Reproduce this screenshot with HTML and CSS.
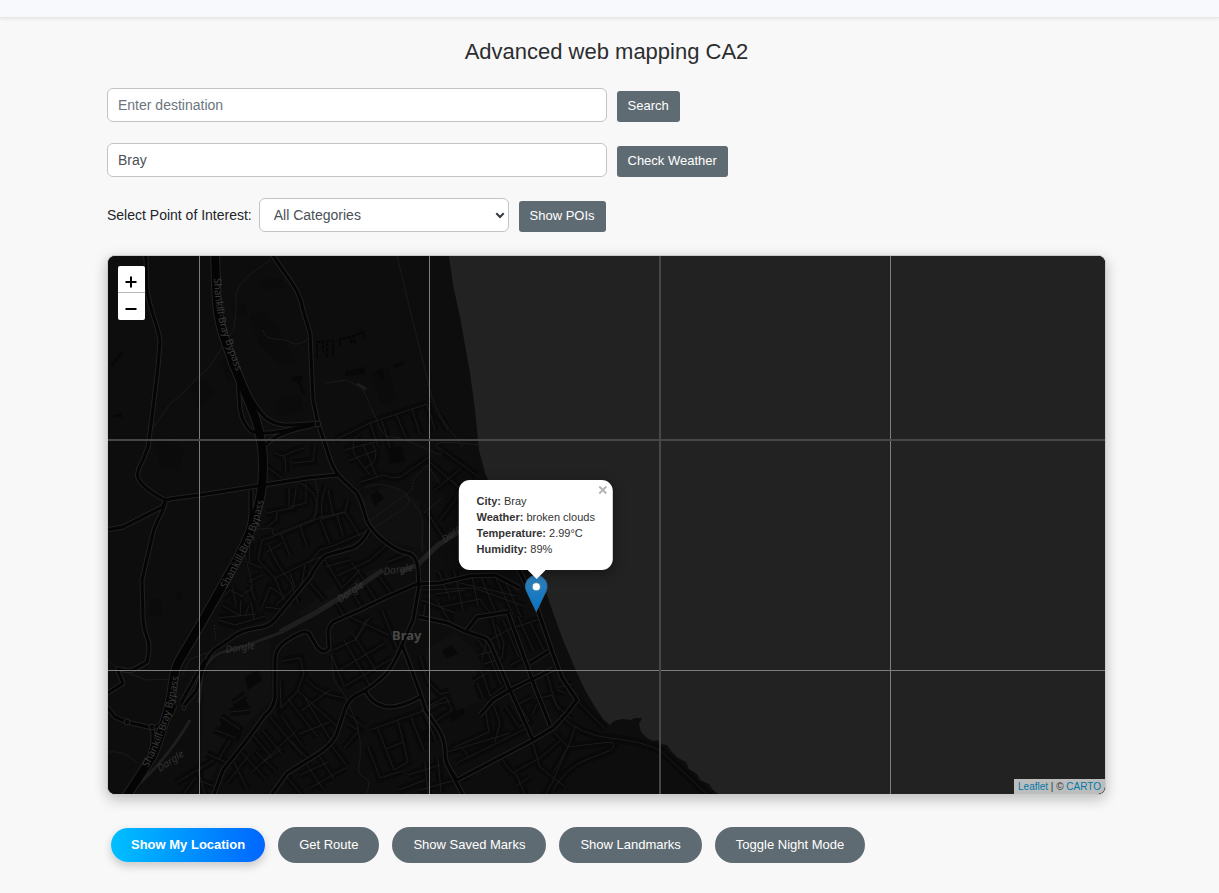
FILE: index.html
```html
<!DOCTYPE html>
<html lang="en">
<head>
<meta charset="utf-8">
<meta name="viewport" content="width=device-width, initial-scale=1">
<title>Advanced web mapping CA2</title>
<link rel="stylesheet" href="styles.css">
</head>
<body>
<header class="topbar"></header>
<main class="page">
  <h1 class="title">Advanced web mapping CA2</h1>
  <form class="row">
    <input class="field" type="text" placeholder="Enter destination" aria-label="Destination">
    <button class="btn" type="button">Search</button>
  </form>
  <form class="row">
    <input class="field" type="text" value="Bray" aria-label="City">
    <button class="btn" type="button">Check Weather</button>
  </form>
  <form class="row">
    <label class="poi-label" for="poi">Select Point of Interest:</label>
    <span class="select-wrap">
      <select class="select" id="poi"><option>All Categories</option></select>
      <svg class="chevron" viewBox="0 0 10 7" aria-hidden="true"><path d="M1.3 1.3 5 5l3.700-3.700"/></svg>
    </span>
    <button class="btn" type="button">Show POIs</button>
  </form>

  <section class="map" aria-label="Map">
    <svg class="tiles" viewBox="108 256 997 538" preserveAspectRatio="xMinYMin slice">
      <defs>
        <path id="motorway" d="M215 250 216 285C217 310 219 322 224 337L233 363 243 387 255 417C260 432 263 445 263 463S262 495 255 517 243 548 233 567L203 620C190 643 182 655 178 663S173 682 172 690 168 711 165 720 158 745 152 757L126 797"/>
        <g id="roads">
          <path d="M143 250 146 258 147 290C150 312 160 330 160 342L158 367 152 417 148 447 143 460Q136 472 138 478T153 493 170 499L200 495 257 486 307 478 338 475"/>
          <path d="M106 530 123 527 162 507Q166 503 165 498M165 503C163 514 156 520 153 533L142 580 143 617Q143 627 147 637T147 662L133 670Q124 671 120 669T120 676 122 684L106 694"/>
          <path d="M269 250 285 273C298 291 301 298 303 310L310 333 311 355 313 400 318 423 327 450Q332 468 339 476L357 493Q362 502 365 515T383 540 407 553 418 569L419 587 413 620 402 645Q393 668 383 677T363 692Q349 697 345 709T337 733 313 757L287 773 270 797"/>
          <path d="M402 645 409 663 420 693 426 711 437 727Q445 739 445 750T448 766L464 797"/>
          <path d="M369 530Q361 545 352 548L327 555Q320 558 310 577L277 617Q271 625 263 627C250 629 240 631 233 637L214 650C202 662 202 676 196 691L183 707"/>
          <path d="M520 588 495 575 470 576 440 583 417 584 387 597 360 610 333 622Q328 627 328 633L329 648Q324 655 317 647L309 633Q305 630 298 634C280 643 275 650 275 660L275 698Q273 709 265 715L247 740 223 770 213 797"/>
          <path d="M419 617 447 623 467 632 485 638Q489 640 492 648L510 690 533 740M457 780 533 740 553 728 567 713 577 700 562 678 553 654 536 605 524 580 513 558M508 613 536 690 550 725M480 715 493 700 510 690 553 669M467 630 477 617 508 612M530 663 549 651M446 763 457 780"/>
          <path d="M106 706 115 717 127 722 152 728Q169 724 175 705M181 703 205 660M152 728Q155 742 150 754"/>
          <path d="M238 378 240 409Q242 423 251 431C265 437 290 429 318 424M241 380C249 393 255 409 266 418S287 426 318 423M266 445C270 438 288 430 311 426M365 690Q370 702 383 706T420 697"/>
          <path d="M251 490 251 508Q252 524 242 547M460 565 494 544"/>
        </g>
        <g id="streets">
          <path d="M360 434Q350 441 354 454L370 475M363 444 377 477M335 440 370 423 427 404M370 423 378 446M382 421 390 448M396 414 406 438M412 409 420 434M427 404 435 430M438 414 448 430M345 450 375 442M348 461 377 450M360 482 384 475Q394 480 402 476L429 457M365 468Q382 461 373 444"/>
          <path d="M267 467 282 478M275 453 285 457 286 472M283 456Q296 450 304 448M293 463 313 461 315 445M267 513 293 508 296 489M289 488 289 507 306 503 306 483M300 483Q320 493 317 511L314 518M326 487Q320 498 322 519L345 512 348 500M333 515 328 489M267 527 276 520 277 512"/>
          <path d="M262 540 280 534 300 526 322 517 345 512 360 536M281 534 290 556M300 526 307 546M320 519 330 544M337 515 343 536M262 540 258 560 275 578 302 565 340 548M267 552 282 543M275 578 284 600M290 573 295 587 276 605M305 565 302 583M269 545Q275 564 291 582L298 603M262 568 249 563 250 543M262 575 248 582M309 563 320 550 335 545 370 530"/>
          <path d="M370 560 387 545M388 562 408 554M360 570 342 588 325 560M352 563 365 581M378 575 391 593M365 583 376 600M351 591 361 606M335 601 345 617M325 567 350 560M337 576 370 560M310 583 325 600"/>
          <path d="M222 598 230 590 244 597M222 605 240 616 241 600M232 587 236 604M218 618 256 614M245 616 249 605M255 600 250 585M262 607 270 587 285 597M265 607 280 609M254 620 251 602M218 620 235 625 265 616"/>
          <path d="M282 661 300 658 304 674 297 692 281 708 280 680M297 690 329 719 339 728M288 699 317 736M305 698 332 742M281 715 303 747M270 717 302 755M263 731 283 755M253 735 272 758M240 751 266 779M234 762 247 789M227 783 249 755M252 772 296 731M301 711 330 690M307 680Q320 695 345 698M299 734 330 722M291 741 308 759M276 771 255 751M262 763 281 749"/>
          <path d="M332 656 344 686M344 640 372 689M353 634 377 672M333 650 355 640 367 619M340 670 385 643M345 686 393 658M350 617 389 635M382 610 397 648M370 617 355 641M343 710 363 726M347 723 359 731 344 748M328 741 347 766M318 754 334 779M306 763 323 789M287 777 302 795M310 788 345 768M300 775 328 762"/>
          <path d="M370 730 398 720 437 706M378 729 394 770 408 762 398 721M386 749 403 742M411 717 424 750M424 712 436 741M425 762 428 794M438 758 441 792M420 790 470 776M408 775 440 765M399 790 425 780M368 747 380 778 402 771M420 656 428 682 440 694 449 692M421 710 446 697 452 710 430 725M431 706 450 701"/>
          <path d="M435 594 465 590M440 607 480 599 492 616M422 600 455 613M439 572 450 599M454 570 463 610M472 576 478 606M481 577 496 613M495 576 513 614M506 583 521 617M423 590 474 588 524 606M456 582 516 596M425 605 423 620M437 601 451 623"/>
          <path d="M488 641 510 629 540 619M492 618 500 649M478 640 489 655 501 685M503 620 519 657M518 616 534 652M530 622 544 650M487 640 482 658M484 664 502 658 504 643 497 625M481 670 490 696 504 686M478 655 494 651M474 681 487 673M483 698 477 683M510 689 534 679M511 665 523 658M515 706 532 697M506 707 519 727 529 721 517 702M533 714Q535 703 543 701M541 698 552 695 559 710M547 674 556 705 571 719"/>
          <path d="M494 706 500 723 495 742M485 707 489 732 453 748M447 752 510 733M457 763 527 728M461 747 469 757M503 760Q510 772 516 774L525 794M514 772 540 758 560 741M533 744 540 767 565 787M555 733 568 747 601 743M575 727 570 742 552 783 544 797M568 747 553 773M601 743Q620 740 611 750L583 761Q566 769 553 790M560 715Q580 735 610 738T660 750L710 797M559 687 573 684M558 690 565 693M577 700 605 729M516 786 530 777"/>
          <path d="M440 520 456 499M445 540 427 512M452 480 480 510M430 462 470 498M459 470 435 490M438 447 476 475"/>
          <path d="M176 783 202 767M183 795 196 777M205 794 198 770 214 760M219 759 230 740M207 754 230 764M200 781 219 788"/>
          <path d="M234 703 245 695M230 712 250 710M221 717 240 729M215 730 236 738"/>
        </g>
        <g id="paths">
          <path d="M108 660 118 669 146 680 174 679M151 431 170 404 181 395 197 378 208 369 219 352 234 329 236 310 236 292Q242 277 271 260M397 256 410 310 425 370 432 398Q438 417 463 447M375 415Q382 438 390 437T424 448 438 449 479 445M263 330Q265 339 276 339T292 343 310 338M325 383 346 380 362 388 368 400 375 417"/>
          <path d="M331 654 334 680 345 696 352 712Q359 725 360 740T359 765 365 778 365 796M370 530 405 508Q416 495 396 488T365 488M405 495Q425 510 423 530T423 552M424 513 442 498M108 752Q125 750 137 763M182 676 190 659 215 650"/>
        </g>
        <path id="bypass-north" d="M214 278C215 304 218 322 224 337L233 363 243 390"/>
        <path id="bypass-mid" d="M226 589 238 567C252 542 260 520 266 491"/>
        <path id="bypass-south" d="M148 768C160 745 169 722 174 700L181 665"/>
        <path id="dargle-a" d="M340 603 368 584"/>
        <path id="dargle-b" d="M384 575 418 570"/>
        <path id="dargle-c" d="M226 653 260 648"/>
        <path id="dargle-d" d="M160 772 190 752"/>
        <path id="dargle-e" d="M445 543 475 520"/>
      </defs>
      <rect class="land" x="100" y="250" width="4000" height="600"/>
      <g class="park">
        <path d="M297 614 340 580 380 567 365 582 335 602 300 616ZM204 678 217 657 270 640 272 700 230 740 205 790 200 780ZM425 650 455 632 480 655 482 700 450 715 430 700ZM357 500 390 485 420 500 425 550 400 545 370 530Z"/>
      </g>
      <g class="blocks-soft">
        <path d="M155 442 172 438 184 450 178 470 160 466ZM190 385 205 381 216 394 198 406ZM220 360 232 357 238 380 228 382ZM260 280 282 278 284 287 262 290ZM250 315 266 312 285 340 295 362 282 366 260 345ZM275 400 300 395 304 412 278 416ZM370 374 388 368 396 400 382 404ZM232 305 246 303 247 313 236 316ZM150 600 160 598 162 615 150 616ZM176 593 182 591 182 601 176 601Z"/>
      </g>
      <g class="blocks">
        <path d="M292 377 303 376 303 380 300 381 306 394 302 394 297 382 292 382ZM345 371 365 367 365 374 345 376ZM393 365 404 361 404 364 395 368ZM373 373 382 368 385 377 381 379 379 374ZM370 495 378 491 384 498 375 506ZM388 448 402 446 405 462 390 464ZM442 650 452 645 458 654 446 658ZM449 716 463 708 465 714 452 722ZM418 732 427 729 429 741 420 743Z"/>
        <path d="M110 365 122 350 123 354 112 367ZM110 416 122 413 122 418ZM245 677 258 670 262 680 248 690ZM233 703 245 697 250 710 235 716ZM222 720 243 727 239 741 218 733Z"/>
      </g>
      <path class="terraces" d="M317 358V342H323V352M327 357V341H333V356M340 346V339L350 337 352 344M355 343 353 336 363 332 365 339"/>
      <use href="#streets" class="street-bed"/>
      <path class="sea" d="M448 250 453 285 460 317 465 345 470 373 475 410 479 450 485 473 496 500 513 535 530 560 542 580 552 610 563 640 577 673 586 692 595 707 603 719 610 725 614 721 622 719 631 720 635 718 642 718 639 724 641 732 647 738 653 741 658 740 660 744 667 745 671 751 678 758 686 762 689 769 697 774 700 780 709 784 713 790 722 797 4000 797 4000 250Z"/>
      <path class="river-wide" d="M460 531 438 545 417 565 400 572M383 570 358 587 317 612 280 632"/>
      <path class="river" d="M320 610 280 633 245 646 220 653Q204 662 202 676L199 703M357 384 366 389M190 720Q170 755 140 783"/>
      <use href="#streets" class="street"/>
      <use href="#paths" class="footpath"/>
      <path class="dashed" d="M315 480 318 495 314 519 273 535 272 528 249 530M245 555 253 588 239 597M371 520 412 490 414 478 428 465 440 484M214 625 216 640"/>
      <use href="#roads" class="road-edge"/>
      <use href="#motorway" class="motorway-edge"/>
      <use href="#roads" class="road"/>
      <use href="#motorway" class="motorway"/>
      <g class="road-edge-thin"><circle cx="318" cy="424" r="3"/><circle cx="152" cy="727" r="3"/><circle cx="184" cy="708" r="2"/><circle cx="127" cy="722" r="3"/></g>
      <g class="map-label">
        <text><textPath href="#bypass-north">Shankill-Bray Bypass</textPath></text>
        <text><textPath href="#bypass-mid">Shankill-Bray Bypass</textPath></text>
        <text><textPath href="#bypass-south">Shankill-Bray Bypass</textPath></text>
      </g>
      <g class="map-label water">
        <text><textPath href="#dargle-a">Dargle</textPath></text>
        <text><textPath href="#dargle-b">Dargle</textPath></text>
        <text><textPath href="#dargle-c">Dargle</textPath></text>
        <text><textPath href="#dargle-d">Dargle</textPath></text>
        <text><textPath href="#dargle-e">Dargle</textPath></text>
      </g>
      <text class="town" x="392" y="640">Bray</text>
      <g class="seam">
        <path d="M199.500 250V800M429.500 250V800M890.500 250V800M100 670.500H4000"/>
      </g>
      <g class="seam-soft"><path d="M660 250V800M100 440H4000"/></g>
    </svg>

    <div class="zoom">
      <button class="zoom-btn" type="button" aria-label="Zoom in"><svg viewBox="0 0 12 12"><path d="M6 .5v11M.5 6h11"/></svg></button>
      <button class="zoom-btn" type="button" aria-label="Zoom out"><svg viewBox="0 0 12 12"><path d="M.5 6h11"/></svg></button>
    </div>

    <div class="pin">
      <div class="popup">
        <button class="popup-close" type="button" aria-label="Close"><svg viewBox="0 0 10 10"><path d="M1.500 1.500l7 7M8.500 1.500l-7 7"/></svg></button>
        <b>City:</b> Bray<br>
        <b>Weather:</b> broken clouds<br>
        <b>Temperature:</b> 2.99°C<br>
        <b>Humidity:</b> 89%
      </div>
      <svg class="marker" viewBox="0 0 25 41" aria-hidden="true">
        <defs><linearGradient id="pin-fill" x1="0" y1="0" x2="0" y2="1"><stop offset="0" stop-color="#3181b8"/><stop offset="1" stop-color="#0873c9"/></linearGradient></defs>
        <path d="M12.500.5C5.600.5.5 6 .5 12.500c0 3 1.200 5.700 2.600 8.400L12.500 40.500l9.400-19.600c1.400-2.700 2.600-5.400 2.600-8.400C24.500 6 19.400.5 12.500.5Z" fill="url(#pin-fill)" stroke="#2d6f9f"/>
        <circle cx="12.500" cy="13" r="4.500" fill="#fff" stroke="#3f7fad"/>
      </svg>
      <span class="tip"></span>
    </div>

    <div class="credit"><a href="#">Leaflet</a> | © <a href="#">CARTO</a></div>
  </section>

  <div class="actions">
    <button class="pill primary" type="button">Show My Location</button>
    <button class="pill" type="button">Get Route</button>
    <button class="pill" type="button">Show Saved Marks</button>
    <button class="pill" type="button">Show Landmarks</button>
    <button class="pill" type="button">Toggle Night Mode</button>
  </div>
</main>
</body>
</html>
```
FILE: styles.css
```css
*, *::before, *::after { box-sizing: border-box; }
body {
  margin: 0;
  background: #f8f8f8;
  color: #212529;
  font-family: "Liberation Sans", Arial, sans-serif;
  font-size: 14px;
}
button, input, select { font-family: inherit; margin: 0; }
.topbar {
  height: 18px;
  background: #f7f9fc;
  border-bottom: 1px solid #e6e7e8;
  box-shadow: 0 1px 3px rgba(0, 0, 0, .08);
}
.page { padding: 20px 113px 30px 107px; }
.title {
  margin: 0 0 22px;
  font-size: 22px;
  line-height: 28px;
  font-weight: 400;
  text-align: center;
  color: #2b2d2f;
}
.row { display: flex; align-items: flex-end; margin-bottom: 21px; }
.field, .select {
  height: 34px;
  border: 1px solid #c2c4c6;
  border-radius: 6px;
  background: #fff;
  color: #495057;
  font-size: 14px;
}
.field { width: 50%; padding: 0 10px; }
.field::placeholder { color: #6c757d; opacity: 1; }
.poi-label { line-height: 34px; }
.select-wrap { position: relative; width: 25%; margin-left: 7px; }
.select { display: block; width: 100%; padding: 0 14px; appearance: none; }
.chevron {
  position: absolute;
  right: 4px;
  top: 14px;
  width: 10px;
  height: 7px;
  fill: none;
  stroke: #343a40;
  stroke-width: 2;
}
.btn {
  height: 31px;
  margin-left: 10px;
  padding: 0 11px 2px;
  border: 0;
  border-radius: 3px;
  background: #5f6b72;
  color: #fff;
  font-size: 13px;
}
.map {
  position: relative;
  height: 540px;
  margin-top: 23px;
  border: 1px solid #c9cccc;
  border-radius: 8px;
  background: #222;
  box-shadow: 0 4px 14px rgba(0, 0, 0, .25);
  overflow: hidden;
}
.tiles { display: block; width: 100%; height: 100%; fill: none; }
.land { fill: #0d0d0d; }
.park { fill: #101010; }
.blocks { fill: #080808; }
.blocks-soft { fill: #0b0b0b; }
.terraces { stroke: #060606; stroke-width: 2; stroke-dasharray: 4 1; }
.sea { fill: #222; }
.street-bed { stroke: #090909; stroke-width: 8; }
.street { stroke: #1b1b1b; stroke-width: 1; }
.footpath { stroke: #1b1b1b; }
.dashed { stroke: #202020; stroke-dasharray: 2 1; }
.river { stroke: #1e1e1e; stroke-width: 3; }
.river-wide { stroke: #202020; stroke-width: 5; }
.road-edge { stroke: #212121; stroke-width: 5; }
.road-edge-thin { stroke: #252525; fill: #080808; }
.road { stroke: #050505; stroke-width: 3; }
.motorway-edge { stroke: #222; stroke-width: 10; }
.motorway { stroke: #040404; stroke-width: 8; }
.map-label { fill: #3a3a3a; font: 10px "Noto Sans", sans-serif; }
.water { fill: #343434; font-style: italic; }
.town { fill: #484848; font: 700 13px "Noto Sans", sans-serif; }
.seam { stroke: #7c7e7e; stroke-width: 1; }
.seam-soft { stroke: #464747; stroke-width: 2; }
.zoom {
  position: absolute;
  left: 10px;
  top: 10px;
  display: flex;
  flex-direction: column;
  width: 27px;
  border-radius: 2px;
  overflow: hidden;
}
.zoom-btn {
  display: grid;
  place-items: center;
  height: 27px;
  padding: 5px 1px 0 0;
  border: 0;
  background: #fff;
}
.zoom-btn:first-child { border-bottom: 1px solid #bbb; }
.zoom-btn svg { width: 12px; height: 12px; stroke: #000; stroke-width: 2; }
.pin {
  position: absolute;
  left: 43%;
  top: 224px;
  display: flex;
  flex-direction: column;
  align-items: center;
  transform: translateX(-50%);
}
.popup {
  position: relative;
  margin-right: 2px;
  padding: 13px 18px;
  border-radius: 11px;
  background: #fff;
  color: #333;
  font-size: 11px;
  line-height: 16px;
  white-space: nowrap;
  box-shadow: 0 3px 13px rgba(0, 0, 0, .4);
}
.popup-close {
  position: absolute;
  right: 5px;
  top: 5px;
  width: 10px;
  height: 10px;
  padding: 0;
  border: 0;
  background: none;
}
.popup-close svg { display: block; stroke: #b5b5b5; stroke-width: 2; }
.tip {
  position: absolute;
  top: 90px;
  width: 18px;
  height: 9px;
  background: #fff;
  clip-path: polygon(0 0, 100% 0, 50% 100%);
}
.marker { width: 23px; height: 37px; margin-top: 5px; }
.credit {
  position: absolute;
  right: 0;
  bottom: 0;
  padding: 0 4px;
  background: #bcbdbd;
  border-bottom-right-radius: 7px;
  color: #333;
  font-size: 10px;
  line-height: 15px;
}
.credit a { color: #0078a8; text-decoration: none; }
.actions {
  display: flex;
  flex-wrap: wrap;
  align-items: center;
  gap: 13px;
  padding: 32px 4px 0;
}
.pill {
  height: 36px;
  padding: 0 21px 2px;
  border: 0;
  border-radius: 18px;
  background: #5f6b72;
  color: #fff;
  font-size: 13px;
}
.primary {
  height: 34px;
  padding: 0 20px 2px;
  background: linear-gradient(90deg, #00bfff, #0066ff);
  font-weight: 700;
  box-shadow: 0 4px 10px rgba(0, 0, 0, .2);
}
```
